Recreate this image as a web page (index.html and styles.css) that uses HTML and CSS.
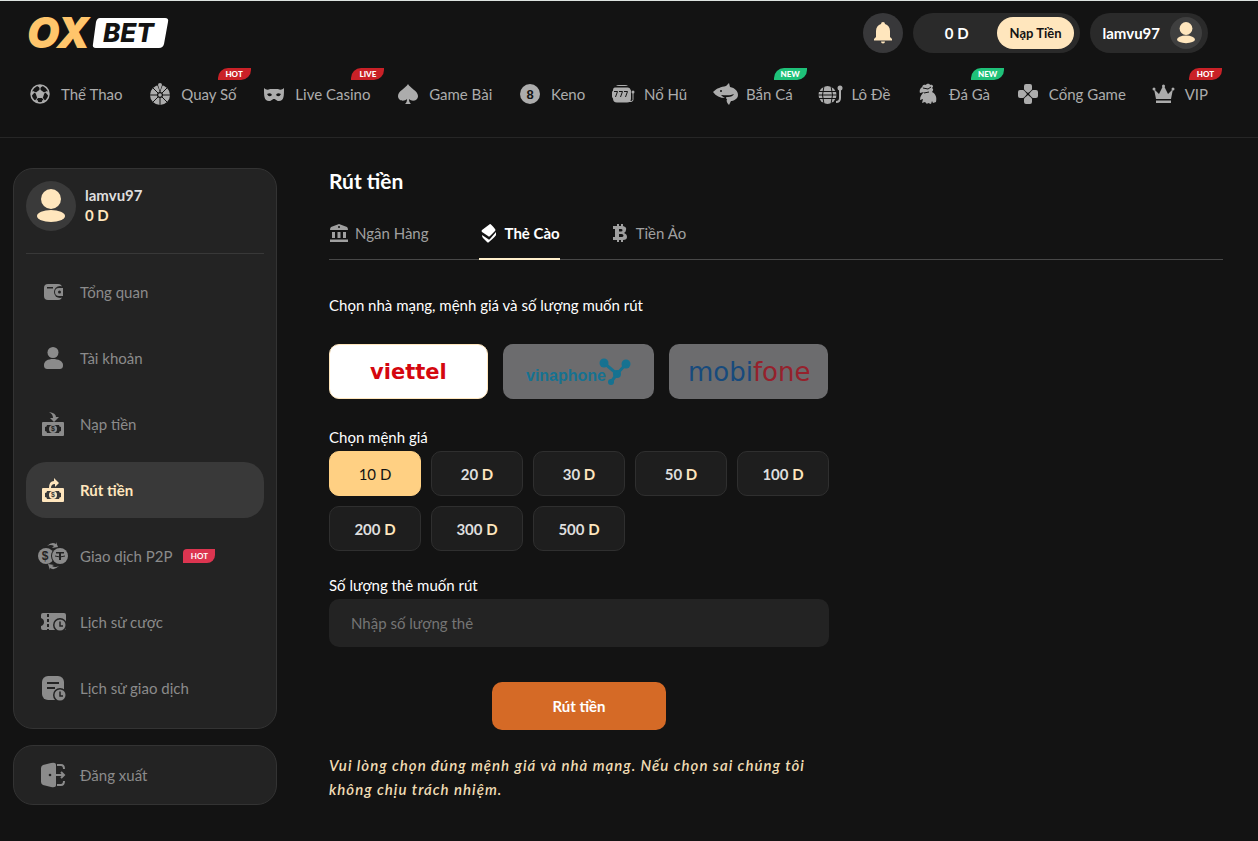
FILE: index.html
```
<!DOCTYPE html>
<html lang="vi">
<head>
  <meta charset="UTF-8" />
  <meta name="viewport" content="width=device-width, initial-scale=1.0" />
  <title>Rút tiền - OXBET</title>
  <link rel="stylesheet" href="styles.css">
</head>
<body>
  <header class="header">
    <div class="header-top">
      <a href="#" class="logo" aria-label="OXBET">
        <svg width="142" height="40" viewBox="0 0 142 40">
          <text class="logo-ox" x="-1" y="35">OX</text>
          <path d="M72 5h65q4 0 3 4l-4 22q-1 4-5 4H68q-4 0-3-4l3-22q1-4 4-4z" fill="#fff"/>
          <text class="logo-bet" x="75" y="29">BET</text>
        </svg>
      </a>
      <div class="header-user">
        <button class="bell" aria-label="Thông báo">
          <svg width="20" height="22" viewBox="0 0 20 22">
            <path d="M10 0a2 2 0 0 1 2 2c3 1 5 3.500 5 7v6l2 2v1.500H1V17l2-2V9c0-3.500 2-6 5-7a2 2 0 0 1 2-2zM8 19.500h4a2 2 0 0 1-4 0z"/>
          </svg>
        </button>
        <div class="balance">
          <span>0 D</span>
          <button class="deposit">Nạp Tiền</button>
        </div>
        <a href="#" class="user">
          <span>lamvu97</span>
          <svg class="user-avatar" width="32" height="32" viewBox="0 0 50 50">
            <circle cx="25" cy="25" r="25" fill="#3f3f3f"/>
            <circle cx="25" cy="18" r="10" fill="#ffe6bd"/>
            <ellipse cx="25" cy="35" rx="14" ry="6" fill="#ffe6bd"/>
          </svg>
        </a>
      </div>
    </div>

    <nav class="nav">
      <a href="#">
        <svg viewBox="0 0 25 25"><circle cx="12" cy="12" r="9" fill="none" stroke="currentColor" stroke-width="1.500"/><path d="M12 7.500l4.500 3.300-1.700 5.200H9.200l-1.700-5.200zM8 3L12 6l4-3zM3 8.500v6l3.500-4zM21 8.500v6l-3.500-4zM5.500 18.500l4-.5 1 3zM18.500 18.500l-4-.5-1 3z"/><path d="M12 8V5M16 11l3-1.500M14.500 16l2 2.500M9.500 16l-2 2.500M8 11L5 9.500" stroke="currentColor"/></svg>
        <span>Thể Thao</span>
      </a>
      <a href="#">
        <svg viewBox="0 0 25 25"><circle cx="12" cy="13" r="10"/><path class="cut-line" d="M12 3v20M2 13h20M5 6l14 14M19 6L5 20"/><circle class="cut" cx="12" cy="13" r="3"/><circle cx="12" cy="13" r="1.800"/><path class="cut" d="M8 0h8l-4 10z"/><path d="M12 1a2 2 0 0 1 2 2l-2 6-2-6a2 2 0 0 1 2-2z"/></svg>
        <span>Quay Số</span><em class="badge red">HOT</em>
      </a>
      <a href="#">
        <svg viewBox="0 0 25 25"><path d="M2 6c2 2 4 2 6 1h8c2 1 4 1 6-1 0 8 0 13-5 13-3 0-3-2-5-2s-2 2-5 2c-5 0-5-5-5-13z"/><path class="cut" d="M5 12q4-2 5 1-3 3-5-1zM19 12q-4-2-5 1 3 3 5-1z"/></svg>
        <span>Live Casino</span><em class="badge red">LIVE</em>
      </a>
      <a href="#">
        <svg viewBox="0 0 25 25"><path d="M12 2c2 4 10 7 10 12 0 5-6 6-9 3 0 3 1 4 2 5H9c1-1 2-2 2-5-3 3-9 2-9-3 0-5 8-8 10-12z"/></svg>
        <span>Game Bài</span>
      </a>
      <a href="#">
        <svg viewBox="0 0 25 25"><circle cx="12" cy="12" r="10"/><text class="cut ball-number" x="12" y="17">8</text></svg>
        <span>Keno</span>
      </a>
      <a href="#">
        <svg viewBox="0 0 25 25"><path d="M5 4q1-1 3-1h6q2 0 3 1zM4 5.500h13q2 0 3 3v8q0 4-4 4H6q-4 0-4-4-1-1-1-2v-4q0-1 1-2 0-3 2-3z"/><path class="cut-line" d="M3 9.500h3.500L4.500 15M8 9.500h3.500L9.500 15M13 9.500h3.500L14.500 15"/><path d="M17 19.500h3q2 0 2-2V10" fill="none" stroke="currentColor"/><circle cx="22" cy="10" r="1.500"/></svg>
        <span>Nổ Hũ</span>
      </a>
      <a href="#">
        <svg viewBox="0 0 25 25"><path d="M0 10c4-4 8-5 13-6l3-3 1 4c5 1 8 4 8 8 0 4-5 6-7 6l-2 4c-2-2-3-4-2-6-2-1-1-2 1-2 3 0 5-1 6-3-4 2-9 1-13 1 1 1 2 2 4 3-5 0-9-2-12-6z"/><circle class="cut" cx="8" cy="9" r="1"/></svg>
        <span>Bắn Cá</span><em class="badge green">NEW</em>
      </a>
      <a href="#">
        <svg viewBox="0 0 25 25"><circle cx="9.500" cy="13" r="9"/><path class="cut-line" d="M0 9.500h19M0 13h19M0 16.500h19M6 4q-3 9 0 18M13 4q3 9 0 18"/><path d="M18 20q4 0 4-4V7" fill="none" stroke="currentColor" stroke-width="2"/><circle cx="22" cy="6" r="2.500"/></svg>
        <span>Lô Đề</span>
      </a>
      <a href="#">
        <svg viewBox="0 0 25 25"><path d="M7 6c-2-2 1-4 3-3 1-2 4-1 4 0 3-1 4 2 2 3 2 1 1 3 0 4 4 2 5 6 4 10l-3 1-1-2-1 3-3-1-1 1-2-2-3 1 1-4-3 1c0-4 2-6 4-8l-4 1c-1-3 1-6 3-6z"/><path class="cut-line" d="M7 6l5 1 3-2M8 11l5-1"/></svg>
        <span>Đá Gà</span><em class="badge green">NEW</em>
      </a>
      <a href="#">
        <svg viewBox="0 0 25 25"><path d="M10 2h4q2 0 2 2v3q0 1-4 4-4-3-4-4V4q0-2 2-2zM10 22h4q2 0 2-2v-3q0-1-4-4-4 3-4 4v3q0 2 2 2zM2 10q0-2 2-2h3q1 0 4 4-3 4-4 4H4q-2 0-2-2zM22 10q0-2-2-2h-3q-1 0-4 4 3 4 4 4h3q2 0 2-2z"/></svg>
        <span>Cổng Game</span>
      </a>
      <a href="#">
        <svg viewBox="0 0 25 25"><path d="M2 7l5 5 4-8h1l4 8 5-5-2 10H4zM4 18.500h15V21H4z"/><circle cx="11.500" cy="4" r="1.500"/><circle cx="2" cy="7" r="1.500"/><circle cx="21" cy="7" r="1.500"/></svg>
        <span>VIP</span><em class="badge red">HOT</em>
      </a>
    </nav>
  </header>

  <div class="container">
    <aside class="sidebar">
      <div class="panel">
        <div class="profile">
          <svg width="50" height="50" viewBox="0 0 50 50">
            <circle cx="25" cy="25" r="25" fill="#3a3a3a"/>
            <circle cx="25" cy="18" r="10" fill="#ffe6bd"/>
            <ellipse cx="25" cy="35" rx="14" ry="6" fill="#ffe6bd"/>
          </svg>
          <div>
            <strong>lamvu97</strong>
            <strong class="profile-balance">0 D</strong>
          </div>
        </div>
        <nav class="menu">
          <a href="#">
            <svg viewBox="0 0 32 32"><rect x="7" y="8" width="18" height="16" rx="4"/><circle class="cut" cx="23" cy="16" r="6"/><path d="M22 12h4v8h-4a4 4 0 0 1 0-8z"/><path class="cut" d="M10 11h6v1.500h-6z"/><circle class="cut" cx="22.500" cy="16" r="1.500"/></svg>
            <span>Tổng quan</span>
          </a>
          <a href="#">
            <svg viewBox="0 0 32 32"><circle cx="16" cy="10.500" r="5.500"/><path d="M7 23c0-4 4-6 9-6s10 2 10 6c0 3-1 4-4 4H11c-3 0-4-1-4-4z"/></svg>
            <span>Tài khoản</span>
          </a>
          <a href="#">
            <svg viewBox="0 0 32 32"><path d="M12 4q7 1 7 5h3l-5 5-4-4h3q0-4-4-6z"/><rect x="5" y="14" width="22" height="14" rx="1"/><path class="cut" d="M10 17h12q0 2 2 2v4q-2 0-2 2H10q0-2-2-2v-4q2 0 2-2z"/><circle cx="16" cy="21" r="4"/><text class="cut coin" x="16" y="23">$</text></svg>
            <span>Nạp tiền</span>
          </a>
          <a href="#" class="active">
            <svg viewBox="0 0 32 32"><path d="M12 14q0-7 5-7V4l5 5-4 4v-3q-4 0-4 4z"/><rect x="5" y="14" width="22" height="14" rx="1"/><path class="cut" d="M10 17h12q0 2 2 2v4q-2 0-2 2H10q0-2-2-2v-4q2 0 2-2z"/><circle cx="16" cy="21" r="4"/><text class="cut coin" x="16" y="23">$</text></svg>
            <span>Rút tiền</span>
          </a>
          <a href="#">
            <svg viewBox="0 0 32 32"><circle cx="9" cy="16" r="8"/><text class="cut coin-big" x="8" y="20">$</text><circle class="cut" cx="23" cy="16" r="9"/><circle cx="23" cy="16" r="8"/><path class="cut" d="M19 12h8v1.500h-3V20h-2v-6.500h-3z"/><path class="cut-line" d="M18 16q5 2 10 0"/><path d="M10 6q5-5 9-2V2l2 5-6 1 2-2q-3-2-7 0zM22 26q-5 5-9 2v2l-2-6 6 1-2 1q3 2 7 0z"/></svg>
            <span>Giao dịch P2P</span><em class="tag">HOT</em>
          </a>
          <a href="#">
            <svg viewBox="0 0 32 32"><path d="M6 7h21q2 0 2 2v14q0 1-2 1H6q-2 0-2-2v-2q3-1 3-4t-3-4V9q0-2 2-2z"/><path class="cut-line" d="M11 8v16" stroke-width="2" stroke-dasharray="3 2"/><circle class="cut" cx="23" cy="19" r="7"/><circle cx="23" cy="19" r="5.500"/><path class="cut-line" d="M23 15.500V20h3" stroke-width="1.500"/></svg>
            <span>Lịch sử cược</span>
          </a>
          <a href="#">
            <svg viewBox="0 0 32 32"><rect x="5" y="4" width="22" height="24" rx="6"/><path class="cut-line" d="M10 11h12M10 16h8" stroke-width="2"/><circle class="cut" cx="23" cy="23" r="7"/><circle cx="23" cy="23" r="5.500"/><path class="cut-line" d="M23 19.500V24h3" stroke-width="1.500"/></svg>
            <span>Lịch sử giao dịch</span>
          </a>
        </nav>
      </div>

      <div class="panel logout">
        <div class="menu">
          <a href="#">
            <svg viewBox="0 0 32 32"><path d="M4 9q0-2 2-3l8-2q5-1 5 2v20q0 3-5 2l-8-2q-2-1-2-3z"/><circle class="cut" cx="13" cy="16" r="1.300"/><path d="M20 6h4q3 0 3 4M20 26h4q3 0 3-4M19 16h8M24 13l3 3-3 3" fill="none" stroke="currentColor" stroke-width="2"/></svg>
            <span>Đăng xuất</span>
          </a>
        </div>
      </div>
    </aside>

    <main class="content">
      <h1>Rút tiền</h1>

      <div class="tabs">
        <button>
          <svg width="20" height="20" viewBox="0 0 20 20"><path d="M10 1l8 3q1 1 1 3H1q0-2 1-3zM3 9h3v6H3zM8.500 9h3v6h-3zM14 9h3v6h-3zM1 16.500h18V19H1z"/><circle class="cut" cx="10" cy="4" r="1"/></svg>
          Ngân Hàng
        </button>
        <button class="active">
          <svg width="20" height="20" viewBox="0 0 20 20"><path d="M11 1q1 0 5 5 1 1 0 2l-5 5q-1 1-2 0L3 9q-1-1 0-2zM3 12l6 4q1 1 2 0l6-7v3q0 1-7 7-1 1-2 0l-4-4q-1-1-1-3z"/></svg>
          Thẻ Cào
        </button>
        <button>
          <svg width="20" height="20" viewBox="0 0 20 20"><path fill-rule="evenodd" d="M3 3h4V1h2v2h2V1h2v2q4 1 3 4 0 2-2 3 3 1 3 4 0 3-4 3v2h-2v-2H9v2H7v-2H3v-3h2V6H3zM9 6v2.500h2q1.500 0 1.500-1.200T11 6zM9 11v3h2.500q2 0 2-1.500t-2-1.500z"/></svg>
          Tiền Ảo
        </button>
      </div>

      <p class="label">Chọn nhà mạng, mệnh giá và số lượng muốn rút</p>
      <div class="carriers">
        <button class="carrier active" aria-label="viettel">
          <svg width="80" height="28" viewBox="0 0 80 28"><text class="viettel" x="1" y="21">viettel</text></svg>
        </button>
        <button class="carrier small" aria-label="vinaphone">
          <svg width="108" height="30" viewBox="0 0 108 30"><text class="vinaphone" x="1" y="24">vinaphone</text><g fill="#167291"><circle cx="79" cy="6" r="4.500"/><circle cx="101" cy="7" r="4.500"/><circle cx="92" cy="17" r="4"/><circle cx="86" cy="25" r="3"/><path d="M79 6l13 11 9-10M92 17l-6 8" fill="none" stroke="#167291" stroke-width="3"/></g></svg>
        </button>
        <button class="carrier" aria-label="mobifone">
          <svg width="124" height="34" viewBox="0 0 124 34"><text class="mobifone" x="1" y="26">mobi<tspan>fone</tspan></text></svg>
        </button>
      </div>

      <p class="label">Chọn mệnh giá</p>
      <div class="amounts">
        <button class="active">10 <span>D</span></button>
        <button>20 <span>D</span></button>
        <button>30 <span>D</span></button>
        <button>50 <span>D</span></button>
        <button>100 <span>D</span></button>
        <button>200 <span>D</span></button>
        <button>300 <span>D</span></button>
        <button>500 <span>D</span></button>
      </div>

      <form class="form">
        <label class="label" for="quantity">Số lượng thẻ muốn rút</label>
        <input type="text" id="quantity" placeholder="Nhập số lượng thẻ">
        <button type="submit">Rút tiền</button>
      </form>

      <p class="note">Vui lòng chọn đúng mệnh giá và nhà mạng. Nếu chọn sai chúng tôi không chịu trách nhiệm.</p>
    </main>
  </div>
</body>
</html>
```
FILE: styles.css
```
* {
  box-sizing: border-box;
}

body {
  margin: 0;
  background: #131313;
  border-top: 1px solid #dde3e0;
  color: #fff;
  font-family: Lato, "Noto Sans", sans-serif;
  font-size: 15px;
  line-height: 20px;
}

a {
  color: inherit;
  text-decoration: none;
}

button, input {
  font: inherit;
  color: inherit;
  border: 0;
  padding: 0;
}

button {
  background: none;
  cursor: pointer;
}

svg {
  display: block;
  flex-shrink: 0;
  fill: currentColor;
}

/* Phần khoét trong icon lấy theo màu nền */
.cut {
  fill: var(--bg, #131313);
}

.cut-line {
  fill: none;
  stroke: var(--bg, #131313);
}

/* Header */
.header {
  padding: 12px 50px 0 28px;
  height: 137px;
  border-bottom: 1px solid #262626;
}

.header-top {
  display: flex;
  justify-content: space-between;
  align-items: center;
}

.logo svg {
  overflow: visible;
}

.logo-ox {
  font: italic 900 42px Inter, sans-serif;
  fill: #ffc56b;
}

.logo-bet {
  font: italic 800 26px Inter, sans-serif;
  fill: #131313;
}

.header-user {
  display: flex;
  gap: 10px;
  font-weight: 700;
}

.bell {
  width: 40px;
  height: 40px;
  border-radius: 50%;
  background: #38383a;
  color: #ffe6bd;
  display: flex;
  align-items: center;
  justify-content: center;
}

.balance, .user {
  height: 40px;
  border-radius: 20px;
  background: #2a2a2a;
  display: flex;
  align-items: center;
  padding-right: 6px;
}

.balance {
  padding-left: 32px;
  gap: 28px;
}

.deposit {
  height: 32px;
  padding: 0 13px;
  border-radius: 16px;
  background: #ffe6bd;
  color: #131313;
  font-size: 13px;
  font-weight: 700;
}

.user {
  padding-left: 12px;
  gap: 10px;
}

.nav {
  display: flex;
  justify-content: space-between;
  margin-top: 28px;
  color: #acacac;
}

.nav a {
  position: relative;
  display: flex;
  align-items: center;
  gap: 8px;
  height: 26px;
  white-space: nowrap;
}

.nav svg {
  width: 25px;
  height: 25px;
}

.ball-number {
  font: bold 13px "Liberation Sans", sans-serif;
  text-anchor: middle;
}

.badge {
  position: absolute;
  top: -13px;
  right: -14px;
  width: 33px;
  height: 12px;
  border-radius: 10px 0;
  color: #fff;
  font-size: 8px;
  font-style: normal;
  font-weight: 900;
  line-height: 12px;
  text-align: center;
}

.red {
  background: #c92127;
}

.green {
  background: #1fc179;
}

/* Layout */
.container {
  display: flex;
  align-items: flex-start;
  gap: 52px;
  padding: 30px 35px 30px 13px;
}

.sidebar {
  width: 264px;
  flex-shrink: 0;
}

.panel {
  --bg: #232323;
  background: #232323;
  border: 1px solid #333;
  border-radius: 20px;
  padding: 12px;
}

.logout {
  margin-top: 16px;
  padding: 1px 12px;
}

.profile {
  display: flex;
  gap: 9px;
  padding-bottom: 22px;
  border-bottom: 1px solid #383838;
  color: #dedede;
}

.profile div {
  display: flex;
  flex-direction: column;
  padding-top: 4px;
}

.profile-balance {
  color: #ffe6bd;
}

.menu {
  display: flex;
  flex-direction: column;
  gap: 10px;
  color: #8b8b8b;
}

.profile + .menu {
  margin-top: 10px;
}

.menu a {
  display: flex;
  align-items: center;
  height: 56px;
  padding: 0 11px;
  gap: 11px;
  border-radius: 20px;
}

.menu svg {
  width: 32px;
  height: 32px;
}

.menu .active {
  --bg: #393939;
  background: #393939;
  color: #ffe6bd;
  font-weight: 700;
}

.coin {
  font: bold 7px "Liberation Sans", sans-serif;
  text-anchor: middle;
}

.coin-big {
  font: bold 12px "Liberation Sans", sans-serif;
  text-anchor: middle;
}

.tag {
  width: 32px;
  height: 14px;
  border-radius: 4px 0 8px 0;
  background: #dc3550;
  color: #fff;
  font-size: 8px;
  font-style: normal;
  font-weight: 700;
  line-height: 14px;
  text-align: center;
}

/* Nội dung rút tiền */
.content {
  flex: 1;
  min-width: 0;
}

h1 {
  margin: 0;
  font-size: 21px;
  line-height: 26px;
}

.tabs {
  display: flex;
  gap: 50px;
  margin: 14px 0 35px;
  border-bottom: 1px solid #484848;
  color: #a0a0a0;
}

.tabs button {
  display: flex;
  align-items: center;
  gap: 6px;
  height: 52px;
  margin-bottom: -1px;
  border-bottom: 2px solid transparent;
}

.tabs .active {
  border-color: #ffefcb;
  color: #fff;
  font-weight: 700;
}

.label {
  display: block;
  margin: 0;
  line-height: 20px;
}

.carriers {
  display: flex;
  gap: 15px;
  margin: 29px 0 28px;
}

.carrier {
  display: flex;
  align-items: center;
  justify-content: center;
  width: 159px;
  height: 55px;
  border-radius: 10px;
  background: #6c6c6e;
}

.carrier.small {
  width: 151px;
}

.carrier.active {
  background: #fff;
  border: 1px solid #ffe6bd;
}

.viettel {
  font: bold 21px "DejaVu Sans", sans-serif;
  fill: #d4070f;
}

.vinaphone {
  font: bold 16px "Liberation Sans", sans-serif;
  fill: #167291;
}

.mobifone {
  font: 26px "DejaVu Sans", sans-serif;
  fill: #174a7c;
}

.mobifone tspan {
  fill: #96212c;
}

.amounts {
  display: flex;
  flex-wrap: wrap;
  gap: 10px;
  max-width: 500px;
  margin: 4px 0 24px;
}

.amounts button {
  width: 92px;
  height: 45px;
  border: 1px solid #2f2f2f;
  border-radius: 10px;
  background: #1e1e1e;
  color: #dedede;
  font-weight: 700;
}

.amounts span {
  color: #ffe6bd;
}

.amounts .active, .amounts .active span {
  background: #ffd083;
  border-color: #ffd083;
  color: #131313;
  font-weight: 400;
}

.form {
  display: flex;
  flex-direction: column;
  max-width: 500px;
}

.form input {
  height: 48px;
  margin: 4px 0 35px;
  padding: 0 22px;
  border-radius: 10px;
  background: #232323;
}

.form input::placeholder {
  color: #757575;
}

.form button {
  align-self: center;
  width: 174px;
  height: 48px;
  border-radius: 10px;
  background: #d56a26;
  font-weight: 700;
}

.note {
  max-width: 500px;
  margin: 23px 0 0;
  color: #f0dcb4;
  font-style: italic;
  font-weight: 600;
  letter-spacing: 1px;
  line-height: 24px;
}
```
